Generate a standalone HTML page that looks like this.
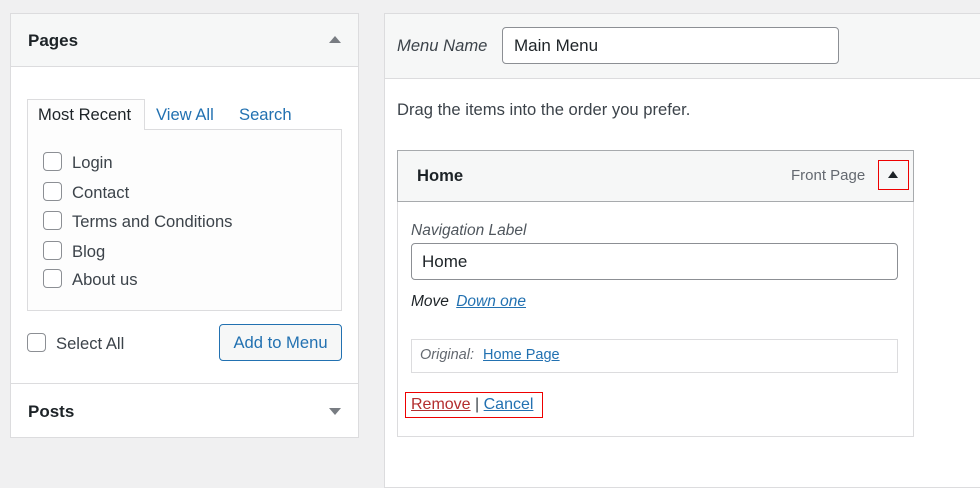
<!DOCTYPE html><html><head><style>
*{box-sizing:border-box;margin:0;padding:0}
body{width:980px;height:482px;background:#f0f0f1;font-family:"Liberation Sans",sans-serif;color:#1d2327;position:relative;overflow:hidden;font-size:16.6px}
.a{position:absolute;white-space:nowrap}
a{color:#2271b1;text-decoration:underline}
.cb{position:absolute;width:19px;height:19px;border:1px solid #8c8f94;border-radius:4px;background:#fff}
</style></head><body>
<div class="a" style="left:10px;top:13px;width:349px;height:425px;background:#fff;border:1px solid #dcdcde"></div>
<div class="a" style="left:11px;top:14px;width:347px;height:53px;background:#f6f7f7;border-bottom:1px solid #dcdcde"></div>
<div class="a" style="left:28px;top:31px;font-weight:bold;font-size:17px">Pages</div>
<div class="a" style="left:329px;top:36px;width:0;height:0;border-left:6px solid transparent;border-right:6px solid transparent;border-bottom:7px solid #787c82"></div>
<div class="a" style="left:27px;top:129px;width:315px;height:182px;border:1px solid #dcdcde;background:#fdfdfd"></div>
<div class="a" style="left:27px;top:99px;width:118px;height:31px;border:1px solid #dcdcde;border-bottom:none;background:#fdfdfd"></div>
<div class="a" style="left:38px;top:105px">Most Recent</div>
<div class="a" style="left:156px;top:105px;color:#2271b1">View All</div>
<div class="a" style="left:239px;top:105px;color:#2271b1">Search</div>
<div class="cb" style="left:43px;top:152px"></div><div class="a" style="left:72px;top:153px;color:#3c434a">Login</div>
<div class="cb" style="left:43px;top:182px"></div><div class="a" style="left:72px;top:183px;color:#3c434a">Contact</div>
<div class="cb" style="left:43px;top:211px"></div><div class="a" style="left:72px;top:212px;color:#3c434a">Terms and Conditions</div>
<div class="cb" style="left:43px;top:241px"></div><div class="a" style="left:72px;top:242px;color:#3c434a">Blog</div>
<div class="cb" style="left:43px;top:269px"></div><div class="a" style="left:72px;top:270px;color:#3c434a">About us</div>
<div class="cb" style="left:27px;top:333px"></div><div class="a" style="left:56px;top:334px;color:#3c434a">Select All</div>
<div class="a" style="left:219px;top:324px;width:123px;height:37px;border:1px solid #2271b1;border-radius:4px;background:#f6f7f7;color:#2271b1;text-align:center;line-height:35px">Add to Menu</div>
<div class="a" style="left:11px;top:383px;width:347px;height:1px;background:#dcdcde"></div>
<div class="a" style="left:28px;top:402px;font-weight:bold;font-size:17px">Posts</div>
<div class="a" style="left:329px;top:408px;width:0;height:0;border-left:6px solid transparent;border-right:6px solid transparent;border-top:7px solid #787c82"></div>

<div class="a" style="left:384px;top:13px;width:600px;height:475px;background:#fff;border:1px solid #dcdcde"></div>
<div class="a" style="left:385px;top:14px;width:600px;height:65px;background:#f6f7f7;border-bottom:1px solid #dcdcde"></div>
<div class="a" style="left:397px;top:36px;font-style:italic;color:#3c434a">Menu Name</div>
<div class="a" style="left:502px;top:27px;width:337px;height:37px;border:1px solid #8c8f94;border-radius:4px;background:#fff;padding:8px 11px;font-size:17px">Main Menu</div>
<div class="a" style="left:397px;top:100px;color:#3c434a">Drag the items into the order you prefer.</div>
<div class="a" style="left:397px;top:150px;width:517px;height:287px;border:1px solid #dcdcde;background:#fff"></div>
<div class="a" style="left:397px;top:150px;width:517px;height:52px;border:1px solid #a7aaad;background:#f6f7f7"></div>
<div class="a" style="left:417px;top:166px;font-weight:bold">Home</div>
<div class="a" style="left:791px;top:167px;color:#646970;font-size:15px">Front Page</div>
<div class="a" style="left:878px;top:160px;width:31px;height:30px;border:1px solid #e00"></div>
<div class="a" style="left:888px;top:171px;width:0;height:0;border-left:5px solid transparent;border-right:5px solid transparent;border-bottom:7px solid #1d2327"></div>
<div class="a" style="left:411px;top:222px;font-style:italic;color:#50575e;font-size:15.5px">Navigation Label</div>
<div class="a" style="left:411px;top:243px;width:487px;height:37px;border:1px solid #8c8f94;border-radius:4px;padding:8px 10px;font-size:17px">Home</div>
<div class="a" style="left:411px;top:293px;font-style:italic;font-size:15.5px">Move <a style="margin-left:3px">Down one</a></div>
<div class="a" style="left:411px;top:339px;width:487px;height:34px;border:1px solid #dcdcde;padding:7px 8px;font-size:14.5px;font-style:italic;color:#646970">Original: <a style="font-style:normal;margin-left:5px">Home Page</a></div>
<div class="a" style="left:405px;top:392px;width:138px;height:26px;border:1px solid #e00;padding:3px 5px;color:#3c434a;font-size:16px"><a style="color:#b32d2e">Remove</a> | <a>Cancel</a></div>
</body></html>
